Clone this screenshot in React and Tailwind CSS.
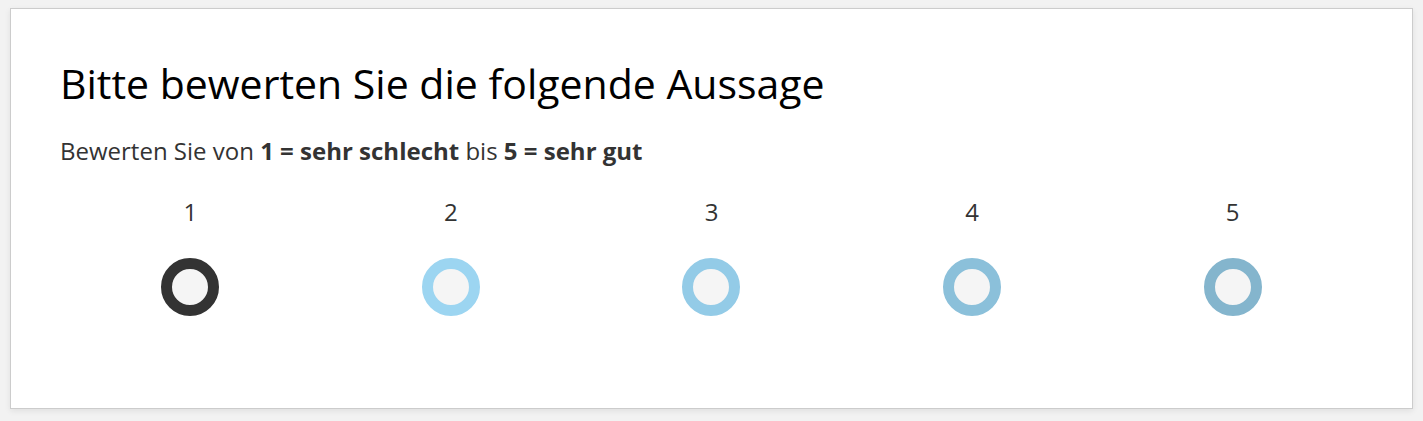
const options = [
  { value: 1, ring: "border-[#333333]" },
  { value: 2, ring: "border-[#9cd5f1]" },
  { value: 3, ring: "border-[#93cbe7]" },
  { value: 4, ring: "border-[#8bc0da]" },
  { value: 5, ring: "border-[#84b5cd]" },
];

export default function App() {
  return (
    <div className="min-h-screen w-full bg-[#f2f2f2] px-[10px] pt-[8px] font-['Open_Sans',sans-serif]">
      <section className="h-[401px] border border-[#cccccc] bg-white px-[49px] pt-[50px] shadow-[0_2px_6px_rgba(0,0,0,0.08)]">
        <h1 className="text-[41px] leading-[48px] text-black">Bitte bewerten Sie die folgende Aussage</h1>
        <p className="mt-[28px] text-[24px] leading-[32px] text-[#333333]">
          Bewerten Sie von <strong className="font-bold">1 = sehr schlecht</strong> bis{" "}
          <strong className="font-bold">5 = sehr gut</strong>
        </p>
        <div className="mt-[29px] grid grid-cols-5">
          {options.map((o) => (
            <label key={o.value} className="flex flex-col items-center">
              <span className="text-[24px] leading-[32px] text-[#333333]">{o.value}</span>
              <span
                className={`mt-[30px] h-[58px] w-[58px] rounded-full border-[11px] bg-[#f5f5f5] ${o.ring}`}
              />
            </label>
          ))}
        </div>
      </section>
    </div>
  );
}
